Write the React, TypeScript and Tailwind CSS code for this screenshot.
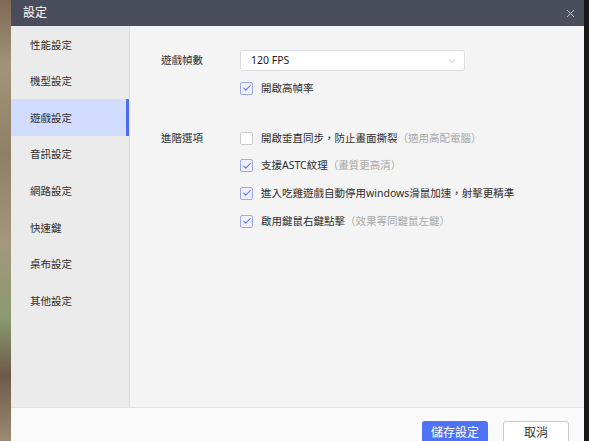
import { ChevronDown, X, Check } from 'lucide-react';

const menu = ['性能設定', '機型設定', '遊戲設定', '音訊設定', '網路設定', '快速鍵', '桌布設定', '其他設定'];

function Box({ checked }: { checked: boolean }) {
  return (
    <div
      className={
        checked
          ? 'w-[13px] h-[13px] rounded-[2px] border border-[#9ea8ec] bg-[#eef0fd] flex items-center justify-center shrink-0'
          : 'w-[13px] h-[13px] rounded-[2px] border border-[#c9c9cf] bg-white shrink-0'
      }
    >
      {checked && <Check size={10} strokeWidth={2.5} className="text-[#5b6ee6]" />}
    </div>
  );
}

function Option({ checked, text, hint }: { checked: boolean; text: string; hint?: string }) {
  return (
    <div className="flex items-center h-[14px]">
      <Box checked={checked} />
      <span className="ml-[8px] text-[#2e2e2e]">{text}</span>
      {hint && <span className="text-[#a9a9a9]">（{hint}）</span>}
    </div>
  );
}

export default function App() {
  return (
    <div
      className="w-[589px] h-[441px] flex overflow-hidden text-[10.5px] leading-none"
      style={{ fontFamily: '"Noto Sans", "Noto Sans CJK TC", sans-serif' }}
    >
      <div className="w-[11px] bg-[linear-gradient(180deg,#7d6a58_0%,#a39378_15%,#8e7f66_35%,#a4977c_55%,#8a9a70_72%,#6e5a48_85%,#9c8a72_100%)]" />
      <div className="flex-1 flex flex-col">
        <div className="h-[26px] bg-[#4a4d5c] flex items-center justify-between pl-[12px] pr-[7px]">
          <span className="text-white text-[12px]">設定</span>
          <X size={13} strokeWidth={1.5} className="text-[#d8d9de]" />
        </div>
        <div className="flex-1 flex">
          <div className="w-[119px] bg-[#ebebeb] border-r border-[#dedede] flex flex-col">
            {menu.map((m, i) => (
              <div
                key={m}
                className={
                  i === 2
                    ? 'h-[36.6px] flex items-center pl-[19px] pt-[1px] bg-[#d1dcff] border-r-[3px] border-[#4d6ef5] text-[#2e2e2e]'
                    : 'h-[36.6px] flex items-center pl-[19px] pt-[1px] text-[#2e2e2e]'
                }
              >
                {m}
              </div>
            ))}
          </div>
          <div className="flex-1 bg-[#f4f4f4] pl-[31px] pt-[24px]">
            <div className="flex">
              <div className="w-[79px] h-[21px] flex items-center text-[#2e2e2e]">遊戲幀數</div>
              <div className="flex flex-col">
                <div className="w-[225px] h-[21px] bg-white border border-[#dcdde3] rounded-[3px] flex items-center justify-between pl-[10px] pr-[6px] text-[#222]">
                  <span>120 FPS</span>
                  <ChevronDown size={12} strokeWidth={1.2} className="text-[#9a9aa0]" />
                </div>
                <div className="mt-[10px]">
                  <Option checked text="開啟高幀率" />
                </div>
              </div>
            </div>
            <div className="flex mt-[36px]">
              <div className="w-[79px] h-[14px] flex items-center text-[#2e2e2e]">進階選項</div>
              <div className="flex flex-col gap-[13.7px]">
                <Option checked={false} text="開啟垂直同步，防止畫面撕裂" hint="適用高配電腦" />
                <Option checked text="支援ASTC紋理" hint="畫質更高清" />
                <Option checked text="進入吃雞遊戲自動停用windows滑鼠加速，射擊更精準" />
                <Option checked text="啟用鍵鼠右鍵點擊" hint="效果等同鍵鼠左鍵" />
              </div>
            </div>
          </div>
        </div>
        <div className="h-[34px] border-t border-[#e2e2e2] bg-[#fafafa] flex justify-end items-start pt-[13px] pr-[15px] gap-[15px]">
          <button className="w-[66px] h-[24px] rounded-[3px] bg-[#4f73f7] text-white text-[12px]">儲存設定</button>
          <button className="w-[66px] h-[24px] rounded-[3px] bg-white border border-[#c8c8cc] text-[#333] text-[12px]">取消</button>
        </div>
      </div>
      <div className="w-[5px] bg-[#19191b]" />
    </div>
  );
}
